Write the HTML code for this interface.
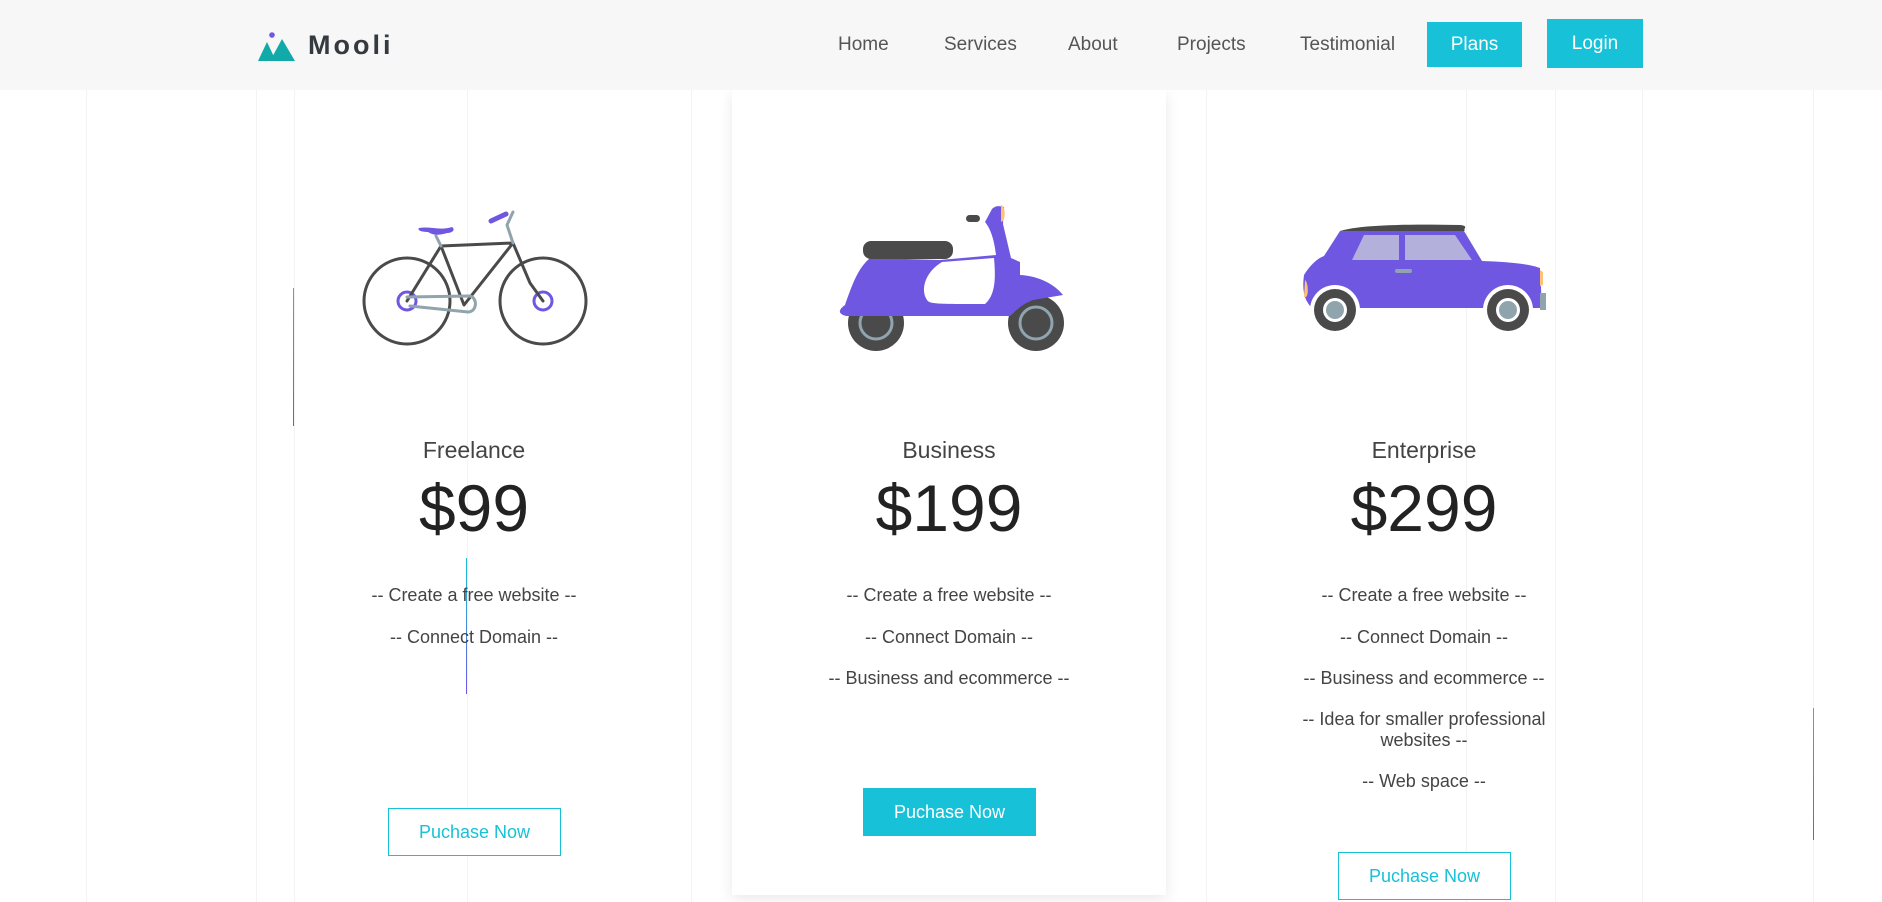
<!DOCTYPE html>
<html><head><meta charset="utf-8"><style>
*{margin:0;padding:0;box-sizing:border-box}
body{width:1882px;height:902px;overflow:hidden;background:#fff;font-family:"Liberation Sans",sans-serif;color:#333;position:relative}
.hdr{position:absolute;left:0;top:0;width:1882px;height:90px;background:#f7f7f7;z-index:5}
.logo{position:absolute;left:258px;top:30px;font-weight:bold;font-size:27px;letter-spacing:3px;color:#343a40}
.nav a{position:absolute;top:34px;font-size:19px;color:#555;text-decoration:none}
.btn{position:absolute;background:#17c1d8;color:#fff;font-size:19px;display:flex;align-items:center;justify-content:center}
.vl{position:absolute;top:90px;width:1px;height:812px;background:#f3f3f3}
.card{position:absolute;left:732px;top:90px;width:434px;height:805px;background:#fff;box-shadow:0 4px 14px rgba(0,0,0,.09)}
.col{position:absolute;text-align:center;width:360px}
.t{position:absolute;top:437px;width:100%;font-size:23px;color:#444}
.p{position:absolute;top:470px;width:100%;font-size:66px;color:#222;font-weight:300}
.f{position:absolute;width:100%;font-size:18px;color:#444;line-height:21px}
.ob{position:absolute;border:1px solid #17c1d8;color:#17c1d8;font-size:18px;width:173px;height:48px;display:flex;align-items:center;justify-content:center;background:#fff}
.acc{position:absolute;width:1px}
</style></head><body>
<div class="vl" style="left:86px"></div><div class="vl" style="left:256px"></div><div class="vl" style="left:294px"></div><div class="vl" style="left:467px"></div><div class="vl" style="left:691px"></div><div class="vl" style="left:1206px"></div><div class="vl" style="left:1466px"></div><div class="vl" style="left:1555px"></div><div class="vl" style="left:1642px"></div><div class="vl" style="left:1813px"></div>
<div class="acc" style="left:293px;top:288px;height:138px;background:linear-gradient(#17c1d8,#6f57e2)"></div>
<div class="acc" style="left:466px;top:558px;height:136px;background:linear-gradient(#17c1d8,#6f57e2)"></div>
<div class="acc" style="left:1813px;top:708px;height:132px;background:linear-gradient(#17c1d8,#6f57e2)"></div>
<div class="hdr">
<svg style="position:absolute;left:258px;top:32px" width="40" height="30" viewBox="0 0 40 30"><circle cx="14" cy="3" r="2.8" fill="#6f57e2"/><polygon points="0,29 9,10 18,29" fill="#12aaa8"/><polygon points="12,29 24,7 37,29" fill="#12aaa8"/></svg>
<div class="logo" style="left:308px">Mooli</div>
<div class="nav"><a style="left:838px">Home</a><a style="left:944px">Services</a><a style="left:1068px">About</a><a style="left:1177px">Projects</a><a style="left:1300px">Testimonial</a></div>
<div class="btn" style="left:1427px;top:22px;width:95px;height:45px">Plans</div>
<div class="btn" style="left:1547px;top:19px;width:96px;height:49px">Login</div>
</div>
<div class="card"></div>
<svg style="position:absolute;left:0;top:0" width="1882" height="902">
<g fill="none" stroke-linecap="round" stroke-linejoin="round">
<circle cx="407" cy="301" r="43" stroke="#4a4a4a" stroke-width="3"/>
<circle cx="543" cy="301" r="43" stroke="#4a4a4a" stroke-width="3"/>
<circle cx="407" cy="301" r="9" stroke="#6f57e2" stroke-width="3"/>
<circle cx="543" cy="301" r="9" stroke="#6f57e2" stroke-width="3"/>
<path d="M407,301 L441,246 L513,243 L464,305 L441,246" stroke="#4a4a4a" stroke-width="3"/>
<path d="M513,243 L530,283 L543,301" stroke="#4a4a4a" stroke-width="3"/>
<path d="M407,297 L470,296 C478,298 477,312 468,312 L410,306" stroke="#90a4ae" stroke-width="3"/>
<path d="M441,246 L436,236 M513,243 L507,225 L513,212" stroke="#90a4ae" stroke-width="3"/>
<path d="M491,221 L506,214" stroke="#6f57e2" stroke-width="5"/>
</g>
<path d="M419,228 C430,226 440,231 452,227 C456,230 452,233 447,233 C440,235 434,236 428,232 C421,232 417,230 419,228Z" fill="#6f57e2"/>
<circle cx="876" cy="323" r="28" fill="#4a4a4a"/><circle cx="876" cy="323" r="16" fill="none" stroke="#90a4ae" stroke-width="3"/>
<circle cx="1036" cy="323" r="28" fill="#4a4a4a"/><circle cx="1036" cy="323" r="16" fill="none" stroke="#90a4ae" stroke-width="3"/>
<path d="M845,305 C852,285 858,268 870,258 L940,260 L996,255 C994,238 990,228 985,222 L992,209 C996,205 1000,206 1004,207 L1003,224 L1011,258 L1020,262 L1020,275 C1040,276 1055,285 1063,295 L1033,300 C1020,305 1015,312 1010,316 L846,316 C838,314 838,310 845,305Z" fill="#6f57e2"/>
<path d="M942,262 C925,272 920,290 927,300 C930,304 935,304 985,304 C995,295 996,280 994,258 Z" fill="#fff"/>
<rect x="863" y="241" width="90" height="18" rx="8" fill="#4a4a4a"/>
<rect x="966" y="215" width="14" height="7" rx="3.5" fill="#4a4a4a"/>
<path d="M1001,205 C1006,206 1006,221 1001,222 Z" fill="#ffc078"/>
<path d="M1340,231 C1360,225 1400,224 1460,225 C1470,226 1462,229 1465,231 Z" fill="#4a4a4a"/>
<path d="M1340,231 L1464,231 L1482,261 C1510,262 1530,264 1540,268 L1542,308 L1312,308 C1304,300 1302,290 1304,275 C1310,265 1318,258 1324,256 Z" fill="#6f57e2"/>
<path d="M1352,260 L1364,235 L1399,235 L1399,260 Z M1405,235 L1455,235 L1472,260 L1405,260 Z" fill="#b4b0dc"/>
<rect x="1395" y="269" width="17" height="4" rx="2" fill="#90a4ae"/>
<path d="M1305,280 C1308,282 1309,295 1306,297 L1304,297 Z M1540,270 L1543,272 L1543,285 L1540,286 Z" fill="#ffc078"/>
<rect x="1540" y="293" width="6" height="17" fill="#90a4ae"/>
<circle cx="1335" cy="310" r="25" fill="#fff"/><circle cx="1335" cy="310" r="21" fill="#4a4a4a"/><circle cx="1335" cy="310" r="12" fill="#fff"/><circle cx="1335" cy="310" r="9" fill="#90a4ae"/>
<circle cx="1508" cy="310" r="25" fill="#fff"/><circle cx="1508" cy="310" r="21" fill="#4a4a4a"/><circle cx="1508" cy="310" r="12" fill="#fff"/><circle cx="1508" cy="310" r="9" fill="#90a4ae"/>
</svg>
<div class="col" style="left:294px;top:0">
<div class="t">Freelance</div><div class="p">$99</div>
<div class="f" style="top:585px">-- Create a free website --</div>
<div class="f" style="top:627px">-- Connect Domain --</div>
<div class="ob" style="left:94px;top:808px">Puchase Now</div>
</div>
<div class="col" style="left:769px;top:0">
<div class="t">Business</div><div class="p">$199</div>
<div class="f" style="top:585px">-- Create a free website --</div>
<div class="f" style="top:627px">-- Connect Domain --</div>
<div class="f" style="top:668px">-- Business and ecommerce --</div>
<div class="ob" style="left:94px;top:788px;background:#17c1d8;color:#fff">Puchase Now</div>
</div>
<div class="col" style="left:1244px;top:0">
<div class="t">Enterprise</div><div class="p">$299</div>
<div class="f" style="top:585px">-- Create a free website --</div>
<div class="f" style="top:627px">-- Connect Domain --</div>
<div class="f" style="top:668px">-- Business and ecommerce --</div>
<div class="f" style="top:709px;left:50px;width:260px">-- Idea for smaller professional websites --</div>
<div class="f" style="top:771px">-- Web space --</div>
<div class="ob" style="left:94px;top:852px">Puchase Now</div>
</div>
</body></html>
